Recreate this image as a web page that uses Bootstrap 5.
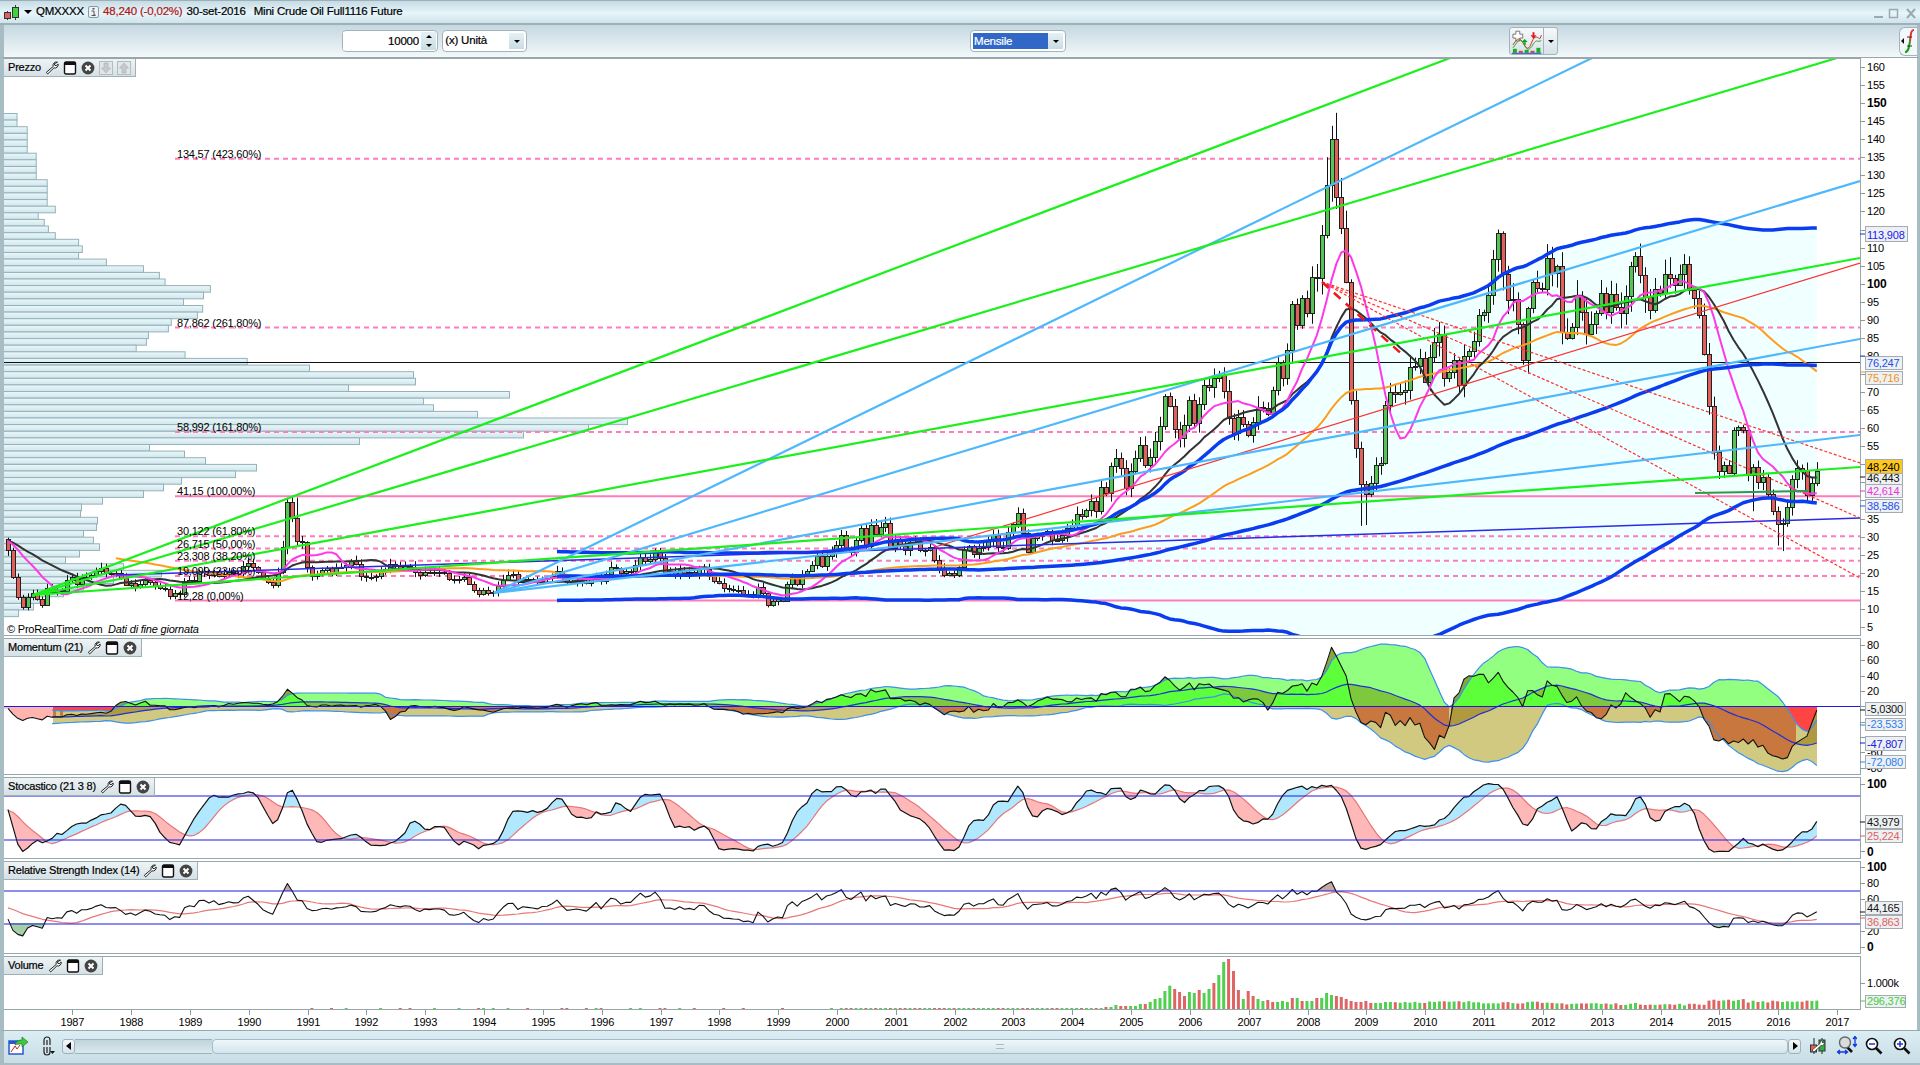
<!DOCTYPE html>
<html lang="it">
<head>
  <meta charset="UTF-8">
  <title>QMXXXX - Mini Crude Oil</title>
  <link href="https://cdn.jsdelivr.net/npm/bootstrap@5.3.0/dist/css/bootstrap.min.css" rel="stylesheet">
  <style>
    html, body { height: 100%; overflow: hidden; background: #fff; }
    body, .tx { font-family: "Liberation Sans", Arial, sans-serif; font-size: 11.5px; letter-spacing: -.2px; color: #000; -webkit-text-stroke: .2px; }
    .tx { font-size: 11px; fill: #000; }
    .tx-b { font-size: 12px; font-weight: bold; }
    .app { width: 1920px; height: 1065px; }
    .titlebar { height: 25px; padding-left: 4px; border-top: 1px solid #9db0b9; border-bottom: 2px solid #9fb0b7; background: linear-gradient(#c6dbe3, #e6f6fb 55%, #cfe3ea); white-space: nowrap; }
    .toolbar { height: 33px; background: linear-gradient(#c5d8e1, #f3f8fa); border-left: 4px solid #a8bcc4; border-right: 3px solid #a8bcc4; padding-left: 338px; border-bottom: 1px solid #98a8aa; }
    .qty { width: 99px; height: 22px; border: 1px solid #a4b4bc; border-radius: 4px; background: #fff; padding-right: 1px; }
    .qty-input { width: 76px; height: 18px; padding: 0; border: 0; text-align: right; font-size: 11.5px; box-shadow: none; letter-spacing: -.2px; outline: none; -webkit-text-stroke: .2px; }
    .spin { width: 15px; height: 18px; margin-left: 2px; background: linear-gradient(#e6f0f4, #c8dce4); }
    .drop { height: 22px; border: 1px solid #a4b4bc; border-radius: 4px; background: #fff; padding: 0 2px; }
    .unit-drop { width: 87px; }
    .period-drop { width: 96px; margin-left: 443px; }
    .period-sel { width: 75px; height: 16px; line-height: 16px; background: #3168c8; color: #fff; padding-left: 1px; }
    .drop-arrow { width: 15px; height: 16px; background: linear-gradient(#e6f0f4, #c8dce4); }
    .tri { width: 0; height: 0; border-left: 4px solid transparent; border-right: 4px solid transparent; border-top: 4px solid #000; }
    .tri-up { border-top: 0; border-bottom: 3px solid #000; border-left-width: 3px; border-right-width: 3px; }
    .tri-sm { border-top-width: 3px; border-left-width: 3px; border-right-width: 3px; }
    .ind-btn { width: 49px; height: 28px; margin-left: 443px; border: 1px solid #a4b4bc; border-radius: 3px; background: linear-gradient(#f6f9fa, #d5e2e8); }
    .ind-arrow { width: 14px; border-left: 1px solid #a4b4bc; }
    .fx-btn { width: 18px; height: 29px; margin-left: 341px; margin-top: 1px; border: 1px solid #a4b4bc; border-right: 0; border-radius: 6px 0 0 6px; background: #f4f7f9; }
    .main { border-left: 4px solid #a8bcc4; border-right: 3px solid #a8bcc4; background: #fff; }
    .pane { width: 1913px; }
    .pane svg { display: block; }
    .pane-price { height: 578px; }
    .pane-mom { height: 137px; margin-top: 2px; }
    .pane-sto { height: 82px; margin-top: 2px; }
    .pane-rsi { height: 93px; margin-top: 2px; }
    .pane-vol { height: 54px; margin-top: 2px; }
    .pane-x { height: 20px; }
    .tag { left: 0; top: 1px; height: 18px; padding: 0 4px 0 4px; gap: 4px; font-size: 11px; background: linear-gradient(#eef4f6, #d5e1e6); border-right: 1px solid #9fb0b7; border-bottom: 1px solid #9fb0b7; }
    .tag svg { width: 14px; height: 14px; flex: none; }
    .bottombar { height: 35px; padding: 0 4px 2px 4px; border-top: 1px solid #98a8aa; border-bottom: 2px solid #a8bcc4; border-left: 4px solid #a8bcc4; background: linear-gradient(#dcedf4, #c8dde6); }
    .link-ico { margin: 0 7px 0 13px; }
    .scroll-btn { width: 13px; height: 15px; background: linear-gradient(#f4f9fb, #d4e4ea); border: 1px solid #9fb2ba; border-radius: 3px; }
    .scroll-track { width: 137px; height: 15px; background: linear-gradient(#c0d4dc, #dbe9ef); border-top: 1px solid #9fb2ba; border-bottom: 1px solid #9fb2ba; }
    .scroll-thumb { width: 1576px; height: 15px; background: linear-gradient(#eef7fa, #d2e5ed); border: 1px solid #a9bcc4; border-radius: 4px; }
    .grip { width: 8px; height: 5px; border-top: 1px solid #a8bac2; border-bottom: 1px solid #a8bac2; }
    .fit-ico, .plus-ico { margin-left: 10px; }
  </style>
</head>
<body>

<svg class="d-none">
  <symbol id="ic-wrench" viewBox="0 0 14 14"><path d="M12.500 1.200a3.400 3.400 0 0 0-4.300 4.300L1.300 11.300l1.400 1.600 6.200-6a3.400 3.400 0 0 0 4.300-3.800l-2 1.600-1.500-.5-.3-1.500z" fill="#fff" stroke="#222" stroke-width="1"/></symbol>
  <symbol id="ic-win" viewBox="0 0 14 14"><rect x="1.500" y="1" width="11" height="12" rx="1.500" fill="#fff" stroke="#111" stroke-width="1.400"/><rect x="1.500" y="1" width="11" height="3" fill="#111"/></symbol>
  <symbol id="ic-close" viewBox="0 0 14 14"><circle cx="7" cy="7" r="6.400" fill="#444"/><path d="M4.500 4.500l5 5m0-5l-5 5" stroke="#fff" stroke-width="2"/></symbol>
  <symbol id="ic-down" viewBox="0 0 14 14"><rect x=".5" y=".5" width="13" height="13" fill="#e2e6e8" stroke="#b4bcc0"/><path d="M5 2h4v5h2.500L7 12 2.500 7H5z" fill="#c4cace" stroke="#a8b0b4" stroke-width=".6"/></symbol>
  <symbol id="ic-up" viewBox="0 0 14 14"><rect x=".5" y=".5" width="13" height="13" fill="#e2e6e8" stroke="#b4bcc0"/><path d="M5 12h4V7h2.500L7 2 2.500 7H5z" fill="#c4cace" stroke="#a8b0b4" stroke-width=".6"/></symbol>
  <symbol id="ic-lens" viewBox="0 0 18 18"><path d="M11 11l5.500 5.500" stroke="#111" stroke-width="2.600"/><circle cx="7" cy="7" r="5.500" fill="#fff" stroke="#111" stroke-width="1.600"/></symbol>
</svg>

<div class="app d-flex flex-column">

  <!-- barra titolo -->
  <div class="titlebar d-flex align-items-center position-relative">
    <svg width="16" height="18" viewBox="0 0 16 18">
      <path d="M3.500 8v9M11.500 2v15" stroke="#333"/>
      <rect x=".5" y="9.500" width="6" height="6" fill="#e06060" stroke="#333"/>
      <rect x="8.500" y="4.500" width="6" height="10" fill="#40d040" stroke="#333"/>
    </svg>
    <span class="tri ms-1 me-1"></span>
    <span class="me-1">QMXXXX</span>
    <svg class="me-1" width="11" height="12" viewBox="0 0 11 12"><rect x=".5" y=".5" width="10" height="11" rx="1.500" fill="#eef3f5" stroke="#8a9aa2"/><rect x="4.500" y="2" width="2" height="1.500" fill="#555"/><path d="M3.500 5H6v4h1.500M3.500 9.500h4" stroke="#555" fill="none"/></svg>
    <span class="me-1" style="color:#b01414">48,240 (-0,02%)</span>
    <span class="me-2">30-set-2016</span>
    <span>Mini Crude Oil Full1116 Future</span>
    <svg class="position-absolute top-0 end-0" width="50" height="22" viewBox="0 0 50 22">
      <path d="M4 16h9" stroke="#9aaab0" stroke-width="2"/>
      <rect x="19.500" y="8.500" width="8" height="8" fill="none" stroke="#9aaab0" stroke-width="1.500"/>
      <path d="M37 8l8 9m0-9l-8 9" stroke="#9aaab0" stroke-width="2"/>
    </svg>
  </div>

  <!-- barra strumenti -->
  <div class="toolbar d-flex align-items-center">
    <div class="qty d-flex align-items-center">
      <input class="qty-input" value="10000">
      <div class="spin d-flex flex-column align-items-center justify-content-around"><span class="tri tri-up"></span><span class="tri tri-sm"></span></div>
    </div>
    <div class="drop unit-drop d-flex align-items-center justify-content-between ms-1">
      <span>(x) Unità</span>
      <span class="drop-arrow d-flex align-items-center justify-content-center"><span class="tri tri-sm"></span></span>
    </div>
    <div class="drop period-drop d-flex align-items-center justify-content-between">
      <span class="period-sel">Mensile</span>
      <span class="drop-arrow d-flex align-items-center justify-content-center"><span class="tri tri-sm"></span></span>
    </div>
    <div class="ind-btn d-flex">
      <svg width="34" height="26" viewBox="0 0 34 26">
        <path d="M6 3h4v3h3v4h-3v3H6v-3H3V6h3z" fill="#fff" stroke="#777"/>
        <path d="M3 17c4-6 6-8 9-4s4 9 7 7 4-12 8-11 3 4 5-2" fill="none" stroke="#d22" stroke-width="1"/>
        <path d="M3 20c4-5 6-10 9-7s5 10 8 8 5-9 8-8 3 0 4-1" fill="none" stroke="#2a2" stroke-width="1"/>
        <path d="M13 17h1.500v-3H12l3-3 3 3h-2v3z" fill="#10a010"/>
        <path d="M23 4h2v3h2l-3 4-3-4h2z" fill="#e02020"/>
        <rect x="3" y="21" width="4" height="4" fill="#14b014"/><rect x="9" y="23" width="4" height="2" fill="#e04040"/><rect x="15" y="22" width="4" height="3" fill="#14b014"/><rect x="21" y="23" width="4" height="2" fill="#e04040"/><rect x="27" y="20" width="4" height="5" fill="#14b014"/>
        <path d="M2 25.500h30" stroke="#2038c0"/>
      </svg>
      <span class="ind-arrow flex-grow-1 d-flex align-items-center justify-content-center"><span class="tri tri-sm"></span></span>
    </div>
    <div class="fx-btn d-flex align-items-center">
      <svg width="17" height="27" viewBox="0 0 17 27">
        <path d="M1 13l3-3v6z" fill="#111"/>
        <path d="M14 2c-3 0-3 3-4 11" fill="none" stroke="#e03030" stroke-width="2"/>
        <path d="M10 13c-1 5-1 11-5 11" fill="none" stroke="#18a018" stroke-width="2"/>
        <path d="M7 9h5M7 18h5" stroke="#333"/>
      </svg>
    </div>
  </div>

  <!-- grafici -->
  <div class="main flex-grow-1 d-flex flex-column">
    <div class="pane pane-price position-relative">
      <svg id="svgPrice" width="1913" height="578" viewBox="4 58 1913 578"></svg>
      <div class="tag position-absolute d-flex align-items-center">
        <span>Prezzo</span>
        <svg><use href="#ic-wrench"/></svg><svg><use href="#ic-win"/></svg><svg><use href="#ic-close"/></svg><svg><use href="#ic-down"/></svg><svg><use href="#ic-up"/></svg>
      </div>
    </div>
    <div class="pane pane-mom position-relative">
      <svg id="svgMom" width="1913" height="137" viewBox="4 638 1913 137"></svg>
      <div class="tag position-absolute d-flex align-items-center">
        <span>Momentum (21)</span>
        <svg><use href="#ic-wrench"/></svg><svg><use href="#ic-win"/></svg><svg><use href="#ic-close"/></svg>
      </div>
    </div>
    <div class="pane pane-sto position-relative">
      <svg id="svgSto" width="1913" height="82" viewBox="4 777 1913 82"></svg>
      <div class="tag position-absolute d-flex align-items-center">
        <span>Stocastico (21 3 8)</span>
        <svg><use href="#ic-wrench"/></svg><svg><use href="#ic-win"/></svg><svg><use href="#ic-close"/></svg>
      </div>
    </div>
    <div class="pane pane-rsi position-relative">
      <svg id="svgRsi" width="1913" height="93" viewBox="4 861 1913 93"></svg>
      <div class="tag position-absolute d-flex align-items-center">
        <span>Relative Strength Index (14)</span>
        <svg><use href="#ic-wrench"/></svg><svg><use href="#ic-win"/></svg><svg><use href="#ic-close"/></svg>
      </div>
    </div>
    <div class="pane pane-vol position-relative">
      <svg id="svgVol" width="1913" height="54" viewBox="4 956 1913 54"></svg>
      <div class="tag position-absolute d-flex align-items-center">
        <span>Volume</span>
        <svg><use href="#ic-wrench"/></svg><svg><use href="#ic-win"/></svg><svg><use href="#ic-close"/></svg>
      </div>
    </div>
    <div class="pane pane-x">
      <svg id="svgX" width="1913" height="20" viewBox="4 1010 1913 20"></svg>
    </div>
  </div>

  <!-- barra in basso -->
  <div class="bottombar d-flex align-items-center">
    <svg width="20" height="20" viewBox="0 0 20 20">
      <rect x="1" y="5" width="14" height="13" fill="#fff" stroke="#2858c8" stroke-width="1.500"/>
      <rect x="1" y="5" width="14" height="3" fill="#2858c8"/>
      <path d="M3 16l4-6 2 3 3-4" fill="none" stroke="#d02020"/>
      <path d="M7 9c1-4 4-5 7-5V1l6 5-6 5V8c-3 0-5 0-7 1z" fill="#40c840" stroke="#208020" stroke-width=".7"/>
    </svg>
    <svg class="link-ico" width="14" height="20" viewBox="0 0 14 20">
      <path d="M3 9V4a3 3 0 0 1 6 0v5M6 4v5M3 11v5a3 3 0 0 0 6 0v-5M6 11v6" fill="none" stroke="#222" stroke-width="1.200"/>
      <path d="M9 15h5l-2.500 3z" fill="#111"/>
    </svg>
    <div class="scroll-btn d-flex align-items-center justify-content-center"><svg width="6" height="8" viewBox="0 0 6 8"><path d="M5 0v8L0 4z"/></svg></div>
    <div class="scroll-track"></div>
    <div class="scroll-thumb d-flex align-items-center justify-content-center"><span class="grip"></span></div>
    <div class="scroll-btn d-flex align-items-center justify-content-center"><svg width="6" height="8" viewBox="0 0 6 8"><path d="M1 0v8l5-4z"/></svg></div>
    <svg class="ms-2" width="18" height="18" viewBox="0 0 18 18">
      <path d="M5 1v16M13 1v16" stroke="#222"/>
      <rect x="1.500" y="8" width="6" height="7" fill="#e06060" stroke="#333"/>
      <rect x="10" y="3" width="6" height="11" fill="#30b040" stroke="#333"/>
      <path d="M15 3.500a3 3 0 0 0-4 3L3 13l2 2 7-6.500a3 3 0 0 0 3.500-3.500L14 6l-1-1z" fill="#fff" stroke="#333" stroke-width=".8"/>
    </svg>
    <svg class="fit-ico" width="20" height="20" viewBox="0 0 20 20">
      <path d="M10 11l5 5" stroke="#111" stroke-width="2.600"/>
      <circle cx="8" cy="6.500" r="5.500" fill="#d8dce0" stroke="#666" stroke-width="1.400"/>
      <path d="M18 1v9M16 3l2-2.500L20 3M16 8l2 2.500L20 8M1 16h9M3 14l-2.500 2L3 18M8 14l2.500 2L8 18" fill="none" stroke="#1038e0" stroke-width="1.300"/>
    </svg>
    <svg class="ms-2" width="18" height="18" viewBox="0 0 18 18"><use href="#ic-lens"/><path d="M4 7h6" stroke="#1038e0" stroke-width="1.500"/></svg>
    <svg class="plus-ico" width="18" height="18" viewBox="0 0 18 18"><use href="#ic-lens"/><path d="M4 7h6M7 4v6" stroke="#1038e0" stroke-width="1.500"/></svg>
  </div>
</div>

<script>
// chiusure mensili dic 1985 - set 2016
const closes = [26.3,
18.8,13.3,10.4,13.3,14.3,12.8,11.2,15.9,14.8,15.3,15.0,18.0,
18.7,17.0,18.8,18.7,19.4,20.6,21.3,20.0,19.8,19.9,18.6,16.7,
17.2,16.1,17.0,17.9,17.4,16.2,15.8,15.6,13.5,14.3,14.0,17.2,
18.0,17.6,20.2,20.4,19.5,20.4,19.1,19.6,20.3,19.9,20.0,21.8,
22.6,21.5,20.3,18.4,17.4,16.5,20.3,27.2,39.5,35.2,28.9,28.4,
21.5,19.2,19.6,20.8,21.3,20.3,21.4,21.7,22.2,23.3,22.4,19.1,
18.9,18.7,19.0,20.2,20.9,22.4,21.8,21.4,21.9,21.7,20.3,19.4,
20.3,20.1,20.3,20.3,19.9,18.2,17.9,18.2,18.7,17.0,15.3,14.2,
15.2,14.4,14.7,16.4,18.1,19.5,19.6,17.5,18.4,18.2,18.0,17.7,
18.4,18.5,19.2,20.4,18.9,17.4,17.6,17.8,17.5,17.2,18.2,19.5,
17.7,19.6,21.5,21.2,19.8,20.4,20.4,22.2,24.4,23.3,23.9,25.9,
24.2,20.3,20.4,19.7,20.8,19.8,20.1,19.6,21.2,21.1,19.2,17.6,
17.2,15.7,15.6,15.3,15.2,14.1,14.2,13.4,16.1,14.4,11.2,12.1,
12.7,12.3,16.8,18.7,16.8,19.3,20.5,22.1,24.5,21.8,24.7,25.6,
27.6,30.4,26.9,25.7,29.0,32.5,27.4,33.1,30.8,32.7,33.8,26.8,
28.7,27.4,26.3,28.5,28.4,26.2,26.3,27.2,23.4,21.2,19.4,19.8,
19.5,21.7,26.3,27.3,25.3,26.9,27.0,28.9,30.5,27.2,26.9,31.2,
33.5,36.6,31.0,25.8,29.6,30.2,30.5,31.6,29.2,29.1,30.4,32.5,
33.1,36.2,35.8,37.4,39.9,37.1,43.8,42.1,49.6,51.8,49.1,43.5,
48.2,51.8,55.4,49.7,52.0,56.5,60.6,69.0,66.2,59.8,57.3,61.0,
67.9,61.4,66.6,71.9,71.3,73.9,74.6,70.3,62.9,58.7,63.1,61.1,
58.1,61.8,65.9,65.7,64.0,70.7,78.2,74.0,81.7,94.5,88.7,96.0,
91.8,101.8,101.6,113.5,127.4,140.0,124.1,115.5,100.6,67.8,54.4,44.6,
41.7,44.8,49.7,50.3,66.3,69.9,69.5,70.0,70.6,77.0,77.3,79.4,
72.9,79.7,83.8,86.2,73.9,75.6,78.9,71.9,80.0,81.4,84.1,91.4,
92.2,97.0,106.7,113.9,102.7,95.4,95.7,88.8,78.9,93.2,100.4,98.8,
98.5,107.1,103.0,104.9,86.5,85.0,88.1,96.5,92.2,86.2,88.9,91.8,
97.5,92.1,97.2,93.5,92.0,96.6,105.0,107.7,102.3,96.4,92.7,98.4,
97.5,102.6,101.6,99.7,102.7,105.4,98.2,96.0,91.2,80.5,66.2,53.3,
48.2,49.8,47.6,59.6,60.3,59.5,47.1,49.2,45.1,46.6,41.7,37.0,
33.6,33.8,38.3,45.9,49.1,48.3,41.6,44.7,48.24];

const N = closes.length, X0 = 8, PITCH = 4.902, PRE = 29;
const xOf = i => X0 + i * PITCH;
const yP = p => 645 - 3.613 * p;

let seed = 7;
const rnd = () => (seed = (seed * 16807) % 2147483647) / 2147483647;

const bars = closes.map((c, i) => {
  const o = i ? closes[i - 1] : 29.4, t = Math.max(o, c), b = Math.min(o, c);
  const v = .4 + c * .04;
  return { o, c, h: t + rnd() * v + .3, l: Math.max(b - rnd() * v - .3, 8) };
});
bars[58].h = 41.15; bars[59].h = 40.8; bars[271].h = 147.3; bars[270].h = 143.7; bars[269].h = 135; bars[304].h = 115; bars[305].h = 114.5;
bars[3].l = 9.8; bars[155].l = 10.4; bars[156].l = 10.6; bars[276].l = 33; bars[277].l = 33.2;
bars[362].l = 26; bars[361].l = 27.5; bars[356].l = 37;

function sma(arr, n, pre) {
  return arr.map((_, i) => {
    let s = 0;
    for (let k = i - n + 1; k <= i; k++) s += k < 0 ? pre : arr[k];
    return s / n;
  });
}
function band(arr, n, k) {
  const mid = [], up = [], lo = [];
  arr.forEach((_, i) => {
    const from = Math.max(0, i - n + 1), w = arr.slice(from, i + 1);
    const m = w.reduce((a, b) => a + b, 0) / w.length;
    const sd = Math.sqrt(w.reduce((a, b) => a + (b - m) * (b - m), 0) / w.length);
    mid.push(m); up.push(m + k * sd); lo.push(m - k * sd);
  });
  return { mid, up, lo };
}
const line = (vals, y, from = 0) => vals.map((v, i) => i < from ? '' : (i === from ? 'M' : 'L') + xOf(i).toFixed(1) + ' ' + y(v).toFixed(1)).join('');
const path = (d, c, w, extra = '') => `<path d="${d}" fill="none" stroke="${c}" stroke-width="${w}" stroke-linejoin="round" ${extra}/>`;
const seg = (x1, y1, x2, y2, c, w, extra = '') => `<line x1="${x1}" y1="${y1}" x2="${x2}" y2="${y2}" stroke="${c}" stroke-width="${w}" ${extra}/>`;
const txt = (x, y, s, cls = '', col = '') => `<text x="${x}" y="${y}" class="tx ${cls}" ${col ? `style="fill:${col};-webkit-text-stroke-color:${col}"` : ''}>${s}</text>`;
const frame = (id, y1, y2) => `<defs><clipPath id="${id}"><rect x="4" y="${y1}" width="1856" height="${y2 - y1}"/></clipPath></defs>`;
const border = (y1, y2) => `<rect x="3.500" y="${y1 + .5}" width="1857" height="${y2 - y1 - 1}" fill="none" stroke="#98a8aa"/>`;
const tick = y => seg(1860, y, 1865, y, '#8a9aa0', 1);
const vbox = (x2, y1, y2, s, col, fill = '#eef1f3') => `<rect x="1865.500" y="${y1 + .5}" width="${x2 - 1866}" height="${y2 - y1 - 1}" fill="${fill}" stroke="#a4acb2"/>` + txt(1867, y2 - 3.5, s, '', col);

// colonne di 1px raggruppate per colore
function columns(fn) {
  const out = {};
  const put = (c, x, a, b) => {
    if (Math.abs(a - b) < .1) return;
    out[c] = (out[c] || '') + `M${x} ${a.toFixed(1)}V${b.toFixed(1)}H${x + 1}V${a.toFixed(1)}Z`;
  };
  for (let x = Math.ceil(xOf(0)) - 4; x < xOf(N - 1); x++) {
    const f = Math.max(0, (x - X0) / PITCH), i = Math.floor(f), t = f - i;
    const at = arr => i + 1 < N ? arr[i] * (1 - t) + arr[i + 1] * t : arr[N - 1];
    fn(x, at, f, put);
  }
  return out;
}
const paint = (cols, order) => order.map(c => cols[c] ? `<path d="${cols[c]}" fill="${c}"/>` : '').join('');

/* ---------- prezzo ---------- */
const bb = band(closes, 138, 1.72);
const BB0 = 112;
let s = frame('cP', 58, 636);
s += `<defs><linearGradient id="gBar" x1="0" y1="0" x2="0" y2="1"><stop offset="0" stop-color="#ecf7f9"/><stop offset="1" stop-color="#cfe6ec"/></linearGradient></defs><g clip-path="url(#cP)">`;

// fascia bollinger
let poly = '';
for (let i = BB0; i < N; i++) poly += xOf(i).toFixed(1) + ',' + yP(bb.up[i]).toFixed(1) + ' ';
for (let i = N - 1; i >= BB0; i--) poly += xOf(i).toFixed(1) + ',' + yP(bb.lo[i]).toFixed(1) + ' ';
s += `<polygon points="${poly}" fill="#f0ffff"/>`;

// volume per prezzo
const profile = [33,33,58,58,58,58,80,80,80,80,107,107,107,107,127,85,100,110,127,184,193,184,252,343,382,396,507,490,441,488,475,411,404,355,350,325,445,597].map(v => v / 2.45)
  .concat([306,410,412,345,506,420,430,474,624,585,520,356,146,181,202,253,232,178,160,140,99,78,77,94,93,80,90,96,76,62,120,158,110,80,60,36,30,15]);
profile.forEach((w, i) => {
  s += `<rect x="3.500" y="${(113.5 + i * 6.62).toFixed(1)}" width="${w.toFixed(1)}" height="6.620" fill="url(#gBar)" stroke="#93b2ba"/>`;
});

// fibonacci
const fib = [[134.57,'134,57 (423,60%)',1],[87.862,'87,862 (261,80%)',1],[58.992,'58,992 (161,80%)',1],[41.15,'41,15 (100,00%)',0],[30.122,'30,122 (61,80%)',1],[26.715,'26,715 (50,00%)',1],[23.308,'23,308 (38,20%)',1],[19.099,'19,099 (23,60%)',1],[12.28,'12,28 (0,00%)',0]];
fib.forEach(f => {
  const y = yP(f[0]).toFixed(1);
  s += seg(175, y, 1860, y, '#ff7cbc', 2, f[2] ? 'stroke-dasharray="5 4"' : '');
});
s += seg(4, 362.5, 1860, 362.5, '#111', 1);

// candele
const GR = '#55c455', RD = '#e0605c';
bars.forEach((b, i) => {
  const x = Math.round(xOf(i)) + .5, up = b.c >= b.o;
  s += seg(x, yP(b.h).toFixed(1), x, yP(b.l).toFixed(1), '#111', 1);
  const yt = Math.round(yP(Math.max(b.o, b.c))), yb = Math.round(yP(Math.min(b.o, b.c)));
  s += `<rect x="${x - 2}" y="${yt + .5}" width="4" height="${Math.max(yb - yt, 1)}" fill="${up ? GR : RD}" stroke="#222" stroke-width="1"/>`;
});

// medie mobili
const ma11 = sma(closes, 11, PRE), ma20 = sma(closes, 20, PRE), ma55 = sma(closes, 55, PRE);
s += path(line(ma55, yP, 22), '#ff9c1c', 2);
s += path(line(ma20, yP), '#333', 2);
s += path(line(ma11, yP), '#ff38e8', 2);
s += path(line(bb.up, yP, BB0), '#0a3cf0', 3.5);
s += path(line(bb.mid, yP, BB0), '#0a3cf0', 3.5);
s += path(line(bb.lo, yP, BB0), '#0a3cf0', 3.5);

// trendline
s += seg(116, 575, 1860, 518, '#2a2ae8', 1.5);
s += seg(935, 547, 1860, 263, '#ff3030', 1.2);
[[1860, 463], [1860, 518], [1860, 578]].forEach(e => { s += seg(1322, 282, e[0], e[1], '#ff3030', 1.2, 'stroke-dasharray="3 2"'); });
s += seg(1322, 282, 1405, 357, '#f01818', 2.5, 'stroke-dasharray="9 7"');
[[1592, 58], [1860, 181], [1860, 339], [1860, 435]].forEach(e => { s += seg(494, 593, e[0], e[1], '#4db8fb', 2.2); });
[[1450, 58], [1837, 58], [1860, 258], [1860, 467]].forEach(e => { s += seg(33, 595, e[0], e[1], '#1cf01c', 2.2); });
s += seg(1695, 493, 1808, 491, '#2c9a4c', 2);

fib.forEach(f => { s += txt(177, (yP(f[0]) - 1).toFixed(1), f[1]); });
s += txt(7, 633, '© ProRealTime.com&#160;&#160;<tspan font-style="italic">Dati di fine giornata</tspan>');
s += '</g>' + border(58, 636);

// asse prezzi
const hiddenP = [40, 45, 50, 75, 115];
for (let p = 5; p <= 160; p += 5) {
  const y = yP(p), big = p % 50 === 0;
  s += tick(Math.round(y) + .5);
  if (!hiddenP.includes(p)) s += txt(1867, (y + 4).toFixed(1), p, big ? 'tx-b' : '');
}
[[234, '113,908', '#2020f0', 1908, 226, 242], [356, '76,247', '#2050f0', 1903, 356, 370], [372, '75,716', '#f09020', 1903, 371, 385], [477, '46,443', '#111', 1903, 473, 485], [491, '42,614', '#f030e0', 1903, 484, 498], [506, '38,586', '#2050f0', 1903, 499, 513]].forEach(v => {
  s += seg(1860, v[0], 1865, v[0], v[2], 1) + vbox(v[3], v[4], v[5], v[1], v[2]);
});
s += vbox(1903, 459, 474, '48,240', '#000', '#ffc81e');
document.getElementById('svgPrice').innerHTML = s;

/* ---------- momentum ---------- */
const yM = m => 706.3 - .765 * m;
const mom = closes.map((c, i) => c - (i >= 21 ? closes[i - 21] : PRE));
const mb = band(mom, 20, 2);
const MB0 = 9;
const LG = '#92ff80', TAN = '#d0c97f', BG = '#5cff3a', OL = '#84a83c', OG = '#7ec83e', BR = '#c8773e', GD = '#b09a40', RED = '#ff4444', PK = '#ffb4b0';
const mc = columns((x, at, f, put) => {
  const m = at(mom), Z = yM(0);
  if (f < MB0) {
    if (m < 0) put(PK, x, Z, yM(m)); else put(BG, x, Z, yM(m));
    return;
  }
  const up = at(mb.up), mid = at(mb.mid), lo = at(mb.lo);
  if (up > 0) put(LG, x, yM(Math.max(lo, 0)), yM(up));
  if (lo < 0) put(TAN, x, yM(Math.min(up, 0)), yM(lo));
  if (m > 0) {
    put(BG, x, Z, yM(Math.min(m, Math.max(up, 0))));
    if (m > up) put(OL, x, yM(Math.max(up, 0)), yM(m));
    if (mid > m) put(OG, x, yM(m), yM(mid));
    if (mid < 0) put(GD, x, Z, yM(mid));
  } else {
    if (up < 0) put(RED, x, Z, yM(Math.max(up, m)));
    if (m < mid) put(BR, x, yM(up < 0 ? Math.max(up, m) : 0), yM(m));
    else {
      if (up > 0) put(BR, x, Z, yM(m));
      put(GD, x, yM(m), yM(mid));
    }
    if (mid > 0) put(OG, x, Z, yM(mid));
  }
});
s = frame('cM', 638, 775) + '<g clip-path="url(#cM)">';
s += paint(mc, [LG, TAN, BG, OL, OG, BR, GD, RED, PK]);
s += path(line(mb.up, yM, MB0), '#3c90f0', 1.2) + path(line(mb.lo, yM, MB0), '#3c90f0', 1.2);
s += path(line(mb.mid, yM, MB0), '#1c30d8', 1.2);
s += path(line(mom, yM), '#111', 1.1);
s += seg(4, 706.5, 1860, 706.5, '#1c1ce0', 1.2);
s += '</g>' + border(638, 775);
for (let v = -80; v <= 80; v += 20) {
  s += tick(Math.round(yM(v)) + .5);
  if (v !== -20 && v !== -40 && v !== 0) s += txt(1867, (yM(v) + 4).toFixed(1), String(v));
}
[[710, '-5,0300', '#111', 702, 716], [725, '-23,533', '#3080f0', 718, 731], [743, '-47,807', '#1818e0', 736, 751], [762, '-72,080', '#3080f0', 755, 769]].forEach(v => {
  s += seg(1860, v[0], 1865, v[0], v[2], 1) + vbox(1906, v[3], v[4], v[1], v[2]);
});
document.getElementById('svgMom').innerHTML = s;

/* ---------- stocastico ---------- */
const yS = v => 854.4 - .735 * v;
const raw = closes.map((c, i) => {
  const w = bars.slice(Math.max(0, i - 20), i + 1);
  const hi = Math.max(...w.map(b => b.h)), lo = Math.min(...w.map(b => b.l));
  return (c - lo) / (hi - lo) * 100;
});
const kLine = sma(raw, 3, 75), dLine = sma(kLine, 8, 60);
const BL = '#b0e8ff', PI = '#ffb8b8';
const sc = columns((x, at, f, put) => {
  const k = at(kLine), d = at(dLine);
  put(k > d ? BL : PI, x, yS(k), yS(d));
});
s = frame('cS', 777, 859) + '<g clip-path="url(#cS)">' + paint(sc, [BL, PI]);
s += path(line(dLine, yS), '#e87878', 1.2) + path(line(kLine, yS), '#111', 1.2);
s += seg(4, 796, 1860, 796, '#1c1ce0', 1.2) + seg(4, 840, 1860, 840, '#1c1ce0', 1.2);
s += '</g>' + border(777, 859);
s += tick(784.5) + txt(1867, 788, '100', 'tx-b') + tick(851.5) + txt(1867, 856, '0', 'tx-b');
s += seg(1860, 822, 1865, 822, '#111', 1) + vbox(1903, 815, 829, '43,979', '#111');
s += seg(1860, 836, 1865, 836, '#e06060', 1) + vbox(1903, 829, 843, '25,224', '#e06060');
document.getElementById('svgSto').innerHTML = s;

/* ---------- RSI ---------- */
const yR = v => 947 - .8 * v;
let ag = .32, al = .36;
const rsi = closes.map((c, i) => {
  const ch = c - (i ? closes[i - 1] : 29.4);
  ag = (ag * 13 + Math.max(ch, 0)) / 14;
  al = (al * 13 + Math.max(-ch, 0)) / 14;
  return 100 - 100 / (1 + ag / al);
});
const rsiMa = sma(rsi, 14, 50);
const rc = columns((x, at, f, put) => {
  const r = at(rsi);
  if (r > 70) put('#c8a8a4', x, yR(70), yR(r));
  if (r < 30) put('#a8d0a8', x, yR(30), yR(r));
});
s = frame('cR', 861, 954) + '<g clip-path="url(#cR)">' + paint(rc, ['#c8a8a4', '#a8d0a8']);
s += path(line(rsiMa, yR), '#e87878', 1.2) + path(line(rsi, yR), '#111', 1.1);
s += seg(4, 891, 1860, 891, '#1c1ce0', 1.2) + seg(4, 924, 1860, 924, '#1c1ce0', 1.2);
s += '</g>' + border(861, 954);
[[100, 'tx-b'], [80, ''], [60, ''], [20, ''], [0, 'tx-b']].forEach(v => { s += tick(Math.round(yR(v[0])) + .5) + txt(1867, (yR(v[0]) + 4).toFixed(1), v[0], v[1]); });
s += tick(915.5);
s += seg(1860, 912, 1865, 912, '#111', 1) + vbox(1903, 901, 915, '44,165', '#111');
s += seg(1860, 918, 1865, 918, '#e06060', 1) + vbox(1903, 915, 929, '36,863', '#e06060');
document.getElementById('svgRsi').innerHTML = s;

/* ---------- volume ---------- */
const volTab = [3,3,3,3,6,6,12,9,9,9,9,15,15,21,30,33,54,70,60,51,39,51,48,57,48,60,78,102,141,150,114,57,30,54,39,30,24,27,21,21,24,21,33,33,24,24,24,33,33,48,42,39,36,30,24,21,21,24,18,18];
const volCol = 'ggrgrggrrgggrgggggrrrggrggrggrrrgrrggrrgggrgrggrgggrrrrrrrrgg';
s = '';
const bottomV = 1009;
bars.forEach((b, i) => {
  let h = 0, col = b.c >= b.o ? '#50d050' : '#e06464';
  if (i >= 220 && i < 280) {
    h = volTab[i - 220] / 3;
    col = (volCol[i - 220] || 'g') === 'r' ? '#e06464' : '#50d050';
  } else if (i >= 280) {
    const yr = 1985 + (i + 11) / 12;
    const base = yr < 2011 ? 6 : yr < 2012 ? 5.5 : yr < 2013 ? 4.5 : yr < 2014 ? 4 : yr < 2014.8 ? 3.5 : yr < 2015.5 ? 8 : 6.5;
    h = base + rnd() * 2;
  } else if (i >= 170) h = 1;
  else if (i >= 56 && rnd() < .2) h = 1;
  if (h) s += `<rect x="${(xOf(i) - 1.5).toFixed(1)}" y="${(bottomV - h).toFixed(1)}" width="3" height="${h.toFixed(1)}" fill="${col}"/>`;
});
s += border(956, 1010);
s += tick(983.5) + txt(1867, 987, '1.000k');
s += seg(1860, 1001, 1865, 1001, '#40d040', 1) + vbox(1906, 995, 1008, '296,376', '#40d040');
document.getElementById('svgVol').innerHTML = s;

/* ---------- asse tempo ---------- */
s = '';
for (let y = 1987; y <= 2017; y++) {
  const x = Math.round(72.2 + (y - 1987) * 58.83) + .5;
  s += seg(x, 1010, x, 1015, '#8a9aa0', 1) + txt(x - 12, 1026, y);
}
document.getElementById('svgX').innerHTML = s;
</script>

<script src="https://cdn.jsdelivr.net/npm/bootstrap@5.3.0/dist/js/bootstrap.bundle.min.js"></script>
</body>
</html>
